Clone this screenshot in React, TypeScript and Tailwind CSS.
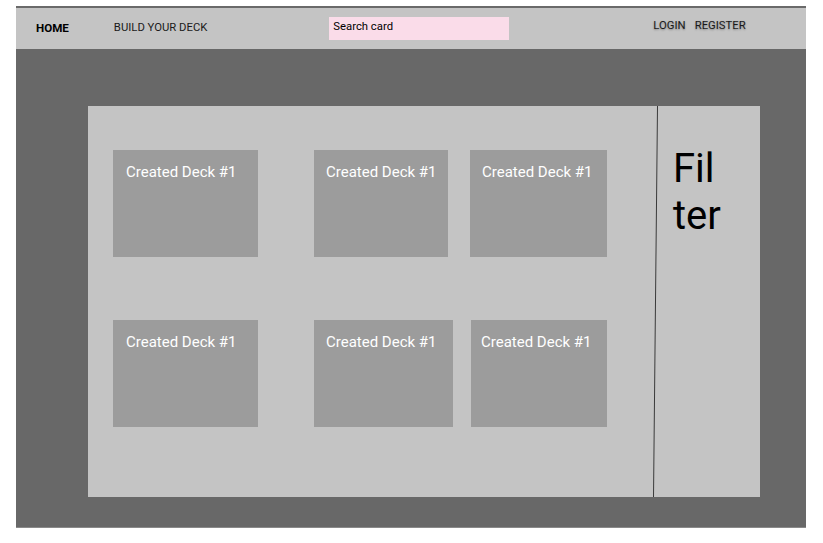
const decks = [
  [
    { left: "ml-[25px]", w: "w-[145px]", pad: "pl-[13px]" },
    { left: "ml-[56px]", w: "w-[134px]", pad: "pl-[12px]" },
    { left: "ml-[22px]", w: "w-[137px]", pad: "pl-[12px]" },
  ],
  [
    { left: "ml-[25px]", w: "w-[145px]", pad: "pl-[13px]" },
    { left: "ml-[56px]", w: "w-[139px]", pad: "pl-[12px]" },
    { left: "ml-[18px]", w: "w-[136px]", pad: "pl-[10px]" },
  ],
];

const DeckCard = ({ left, w, pad }: { left: string; w: string; pad: string }) => {
  return (
    <div className={`${left} ${w} ${pad} h-[107px] bg-[#9c9c9c] pt-[13px]`}>
      <p className="text-[15px] leading-[18px] text-white">Created Deck #1</p>
    </div>
  );
};

const App = () => {
  return (
    <div className="min-h-screen bg-white pt-[6px] pl-[16px] font-['Roboto',sans-serif]">
      <div className="w-[790px]">
        {/* ============ header ============ */}
        <header className="flex h-[43px] items-start border-t-2 border-[#6a6a6a] bg-[#c4c4c4] text-[11.3px] text-[#1a1a1a]">
          <a className="ml-[20px] mt-[12px] text-[11.6px] font-bold text-black">HOME</a>
          <a className="ml-[45px] mt-[12px]">BUILD YOUR DECK</a>
          <div className="ml-[122px] mt-[9px] h-[23px] w-[180px] bg-[#fadce9] pl-[4px] pt-[2px] text-black">
            Search card
          </div>
          <div className="ml-[144px] mt-[10px] flex gap-[9px] [text-shadow:0_1px_2px_rgba(0,0,0,0.35)]">
            <a>LOGIN</a>
            <a>REGISTER</a>
          </div>
        </header>

        {/* ============ body ============ */}
        <main className="h-[479px] border-b border-[#8a8a8a] bg-[#686868] pl-[72px] pt-[57px]">
          <div className="relative flex h-[391px] w-[672px] bg-[#c4c4c4]">
            <div className="flex w-[568px] flex-col gap-[63px] pt-[44px]">
              {decks.map((row, i) => (
                <div key={i} className="flex">
                  {row.map((d, j) => (
                    <DeckCard key={j} left={d.left} w={d.w} pad={d.pad} />
                  ))}
                </div>
              ))}
            </div>
            <svg className="absolute left-[565px] top-0" width="6" height="391">
              <line x1="4.5" y1="0" x2="0.5" y2="391" stroke="#3a3a3a" strokeWidth="1" />
            </svg>
            <div className="pl-[17px] pt-[39px] text-[40px] leading-[47px] text-black">
              Fil
              <br />
              ter
            </div>
          </div>
        </main>
      </div>
    </div>
  );
};

export default App;
